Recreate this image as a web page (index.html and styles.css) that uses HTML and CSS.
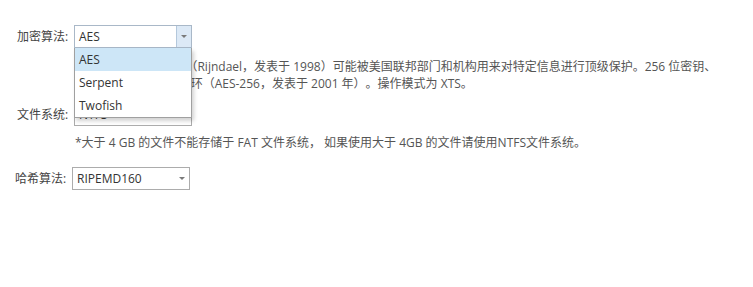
FILE: index.html
```html
<!DOCTYPE html>
<html lang="zh-CN">
<head>
<meta charset="utf-8">
<title>加密选项</title>
<link rel="stylesheet" href="styles.css">
</head>
<body>
<div class="form">
  <div class="row row-enc">
    <span class="label">加密算法:</span>
    <div class="select-wrap">
      <div class="select open">
        <span class="value">AES</span>
        <span class="arrow"><span class="tri"></span></span>
      </div>
      <ul class="dropdown">
        <li class="item active">AES</li>
        <li class="item">Serpent</li>
        <li class="item">Twofish</li>
      </ul>
    </div>
  </div>
  <p class="desc">FIPS 批准的加密算法（Rijndael，发表于 1998）可能被美国联邦部门和机构用来对特定信息进行顶级保护。256 位密钥、<br>128 位块，共 14 轮循环（AES-256，发表于 2001 年）。操作模式为 XTS。</p>
  <div class="row row-fs">
    <span class="label">文件系统:</span>
    <div class="select">
      <span class="value">NTFS</span>
      <span class="arrow plain"><span class="tri"></span></span>
    </div>
  </div>
  <p class="note">*大于 4 GB 的文件不能存储于 FAT 文件系统， 如果使用大于 4GB 的文件请使用NTFS文件系统。</p>
  <div class="row row-hash">
    <span class="label">哈希算法:</span>
    <div class="select">
      <span class="value">RIPEMD160</span>
      <span class="arrow plain"><span class="tri"></span></span>
    </div>
  </div>
</div>
</body>
</html>
```
FILE: styles.css
```css
html, body {
  margin: 0;
  padding: 0;
  background: #ffffff;
}
body {
  font-family: "Open Sans", "Noto Sans CJK SC", sans-serif;
  font-size: 12px;
  color: #444444;
  text-spacing-trim: space-all;
}
.form {
  padding: 25px 0 0 17px;
}
.row {
  display: flex;
  align-items: center;
  gap: 4px;
}
.label {
  width: 53px;
  line-height: 23px;
  color: #444444;
}
.select-wrap {
  position: relative;
}
.select {
  box-sizing: border-box;
  width: 118px;
  height: 23px;
  border: 1px solid #acacac;
  display: flex;
  align-items: center;
  background: #ffffff;
}
.select .value {
  flex: 1;
  padding-left: 4px;
  color: #333333;
}
.select .arrow {
  box-sizing: border-box;
  width: 15px;
  height: 100%;
  display: flex;
  align-items: center;
  justify-content: center;
}
.select.open {
  border-color: #a9b8c8;
}
.select.open .arrow {
  background: #dce9f6;
  border-left: 1px solid #b4c8dc;
}
.tri {
  width: 0;
  height: 0;
  border-left: 3px solid transparent;
  border-right: 3px solid transparent;
  border-top: 3px solid #7a7a7a;
}
.dropdown {
  position: absolute;
  left: 0;
  top: 23px;
  box-sizing: border-box;
  width: 118px;
  margin: 0;
  padding: 0;
  list-style: none;
  background: #ffffff;
  border: 1px solid #a0a0a0;
  border-top: none;
  box-shadow: 2px 3px 4px rgba(0, 0, 0, 0.18);
  z-index: 2;
}
.item {
  height: 23px;
  line-height: 23px;
  padding-left: 4px;
  color: #333333;
}
.item.active {
  background: #cde6f7;
}
.desc {
  margin: 10px 0 0 58px;
  line-height: 17px;
  color: #555555;
}
.row-fs {
  margin-top: 11px;
}
.note {
  margin: 8px 0 0 58px;
  line-height: 18px;
  color: #555555;
}
.row-hash {
  margin-top: 15px;
  margin-left: -2px;
}
```
